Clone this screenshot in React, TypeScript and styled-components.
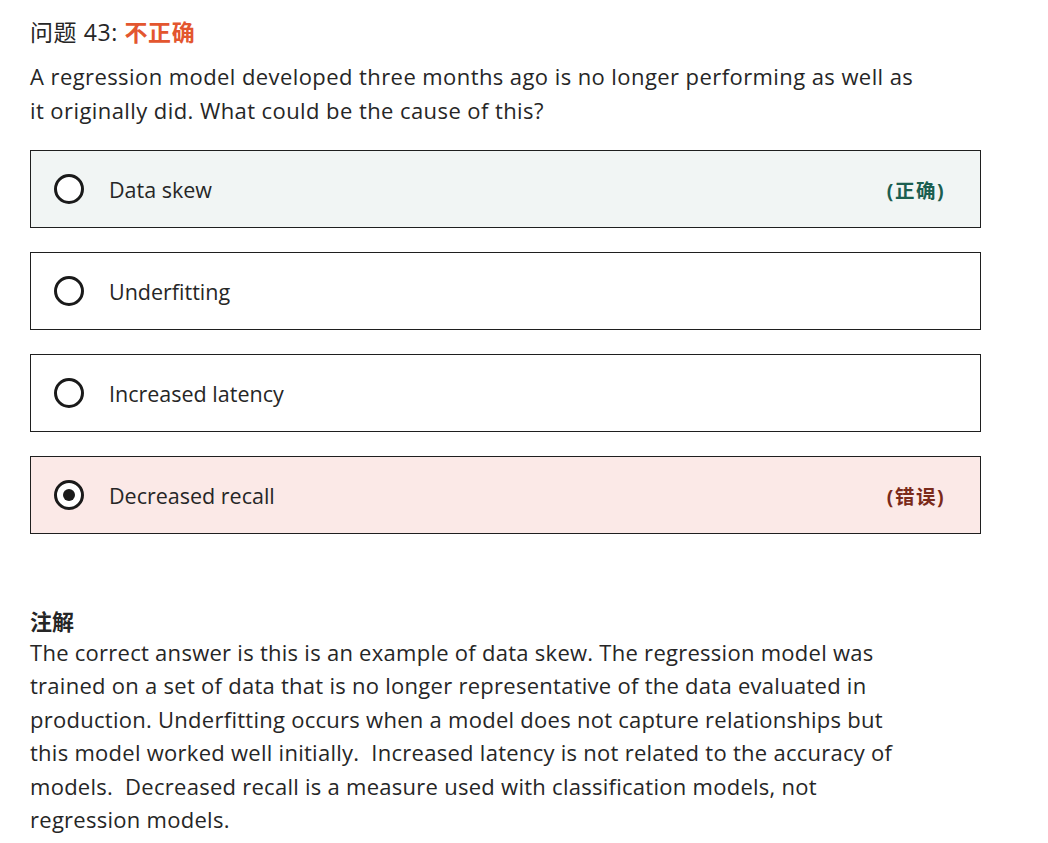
import React from "react";
import styled, { createGlobalStyle } from "styled-components";

const Global = createGlobalStyle`
  body {
    margin: 0;
    background: #ffffff;
    font-family: "Segoe UI", "Open Sans", "Noto Sans", "Noto Sans CJK SC", sans-serif;
    color: #262626;
  }
`;

const Page = styled.div`
  padding: 14px 30px 20px 30px;
  width: 951px;
`;

const Header = styled.div`
  font-size: 23px;
  line-height: 36px;
  letter-spacing: 0.6px;
  color: #262626;
`;

const Status = styled.span`
  color: #e3562f;
  font-weight: 700;
`;

const Question = styled.p`
  margin: 9px 0 23px 0;
  font-size: 22px;
  line-height: 34px;
  letter-spacing: 0.42px;
  white-space: nowrap;
`;

const Options = styled.div`
  display: flex;
  flex-direction: column;
  gap: 24px;
`;

const Option = styled.div<{ $tone?: "correct" | "wrong" }>`
  display: flex;
  align-items: center;
  height: 78px;
  box-sizing: border-box;
  border: 1px solid #1f1f1f;
  padding: 0 35px 0 23px;
  background: ${(p) =>
    p.$tone === "correct" ? "#f1f5f4" : p.$tone === "wrong" ? "#fbe9e7" : "#ffffff"};
`;

const Radio = styled.span<{ $checked?: boolean }>`
  width: 30px;
  height: 30px;
  box-sizing: border-box;
  border: 3px solid #1a1a1a;
  border-radius: 50%;
  display: flex;
  align-items: center;
  justify-content: center;
  background: #ffffff;
  flex-shrink: 0;
  &::after {
    content: "";
    display: ${(p) => (p.$checked ? "block" : "none")};
    width: 12px;
    height: 12px;
    border-radius: 50%;
    background: #1a1a1a;
  }
`;

const OptionText = styled.span`
  margin-left: 25px;
  font-size: 21.5px;
  flex: 1;
`;

const Verdict = styled.span<{ $tone: "correct" | "wrong" }>`
  font-size: 19.5px;
  letter-spacing: 1.5px;
  font-weight: 700;
  color: ${(p) => (p.$tone === "correct" ? "#1b5e50" : "#7a2a1a")};
`;

const NoteTitle = styled.div`
  margin-top: 72px;
  font-size: 22px;
  font-weight: 700;
  line-height: 30px;
`;

const Note = styled.p`
  margin: 0;
  font-size: 22px;
  line-height: 33.4px;
  letter-spacing: 0.27px;
  white-space: nowrap;
`;

export default function App() {
  return (
    <>
      <Global />
      <Page>
        <Header>
          问题 43: <Status>不正确</Status>
        </Header>
        <Question>
          A regression model developed three months ago is no longer performing as well as
          <br />
          it originally did. What could be the cause of this?
        </Question>
        <Options>
          <Option $tone="correct">
            <Radio />
            <OptionText>Data skew</OptionText>
            <Verdict $tone="correct">(正确)</Verdict>
          </Option>
          <Option>
            <Radio />
            <OptionText>Underfitting</OptionText>
          </Option>
          <Option>
            <Radio />
            <OptionText>Increased latency</OptionText>
          </Option>
          <Option $tone="wrong">
            <Radio $checked />
            <OptionText>Decreased recall</OptionText>
            <Verdict $tone="wrong">(错误)</Verdict>
          </Option>
        </Options>
        <NoteTitle>注解</NoteTitle>
        <Note>
          The correct answer is this is an example of data skew. The regression model was
          <br />
          trained on a set of data that is no longer representative of the data evaluated in
          <br />
          production. Underfitting occurs when a model does not capture relationships but
          <br />
          this model worked well initially.&nbsp; Increased latency is not related to the accuracy of
          <br />
          models.&nbsp; Decreased recall is a measure used with classification models, not
          <br />
          regression models.
        </Note>
      </Page>
    </>
  );
}
